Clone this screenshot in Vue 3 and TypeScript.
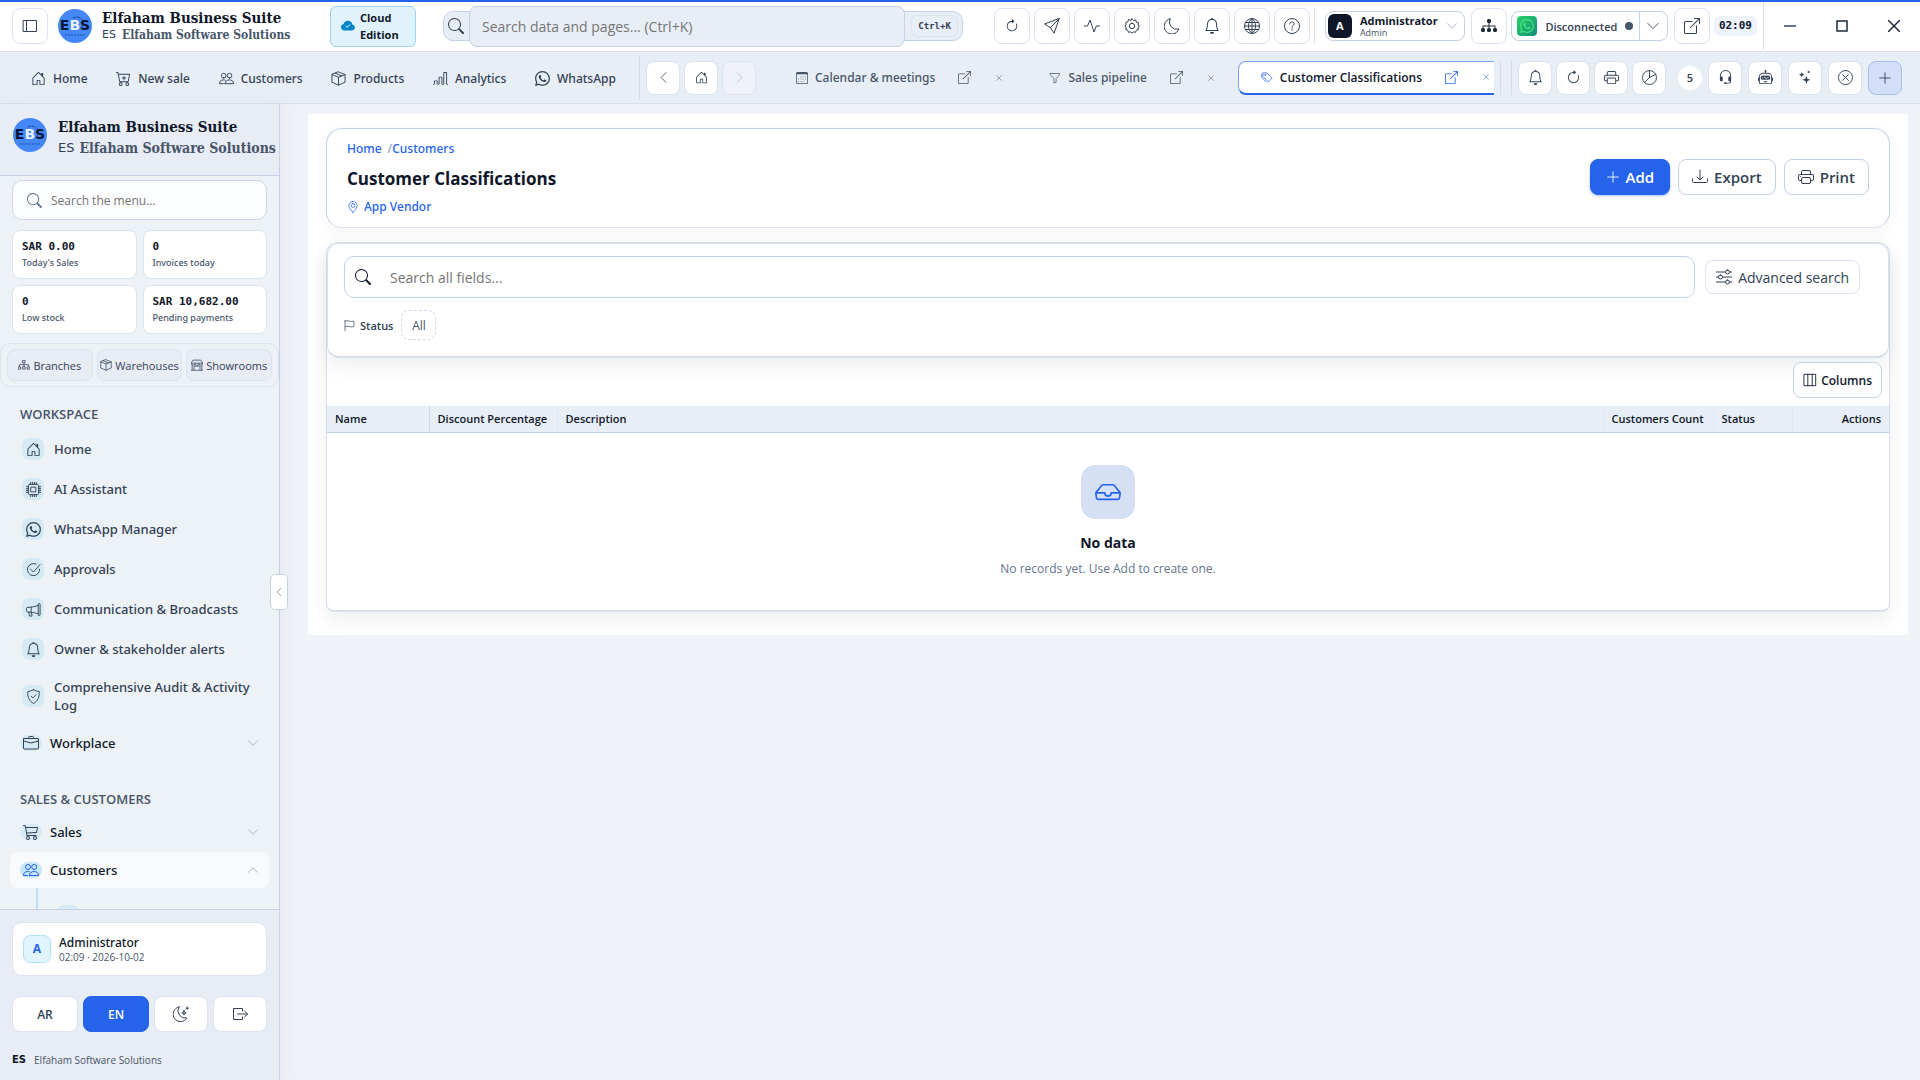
<script setup lang="ts">
import { h, ref } from 'vue'

interface Glyph { d: string; stroke?: boolean }

const glyphs: Record<string, Glyph> = {
  house: { d: 'M8.354 1.146a.5.5 0 0 0-.708 0l-6 6A.5.5 0 0 0 1.5 7.5v7a.5.5 0 0 0 .5.5h4.5a.5.5 0 0 0 .5-.5v-4h2v4a.5.5 0 0 0 .5.5H14a.5.5 0 0 0 .5-.5v-7a.5.5 0 0 0-.146-.354L13 5.793V2.5a.5.5 0 0 0-.5-.5h-1a.5.5 0 0 0-.5.5v1.293zM2.5 14V7.707l5.5-5.5 5.5 5.5V14H10v-4a.5.5 0 0 0-.5-.5h-3a.5.5 0 0 0-.5.5v4z' },
  cartPlus: { d: 'M9 5.5a.5.5 0 0 0-1 0V7H6.5a.5.5 0 0 0 0 1H8v1.500a.5.5 0 0 0 1 0V8h1.500a.5.5 0 0 0 0-1H9zM.5 1a.5.5 0 0 0 0 1h1.110l.401 1.607 1.498 7.985A.5.5 0 0 0 4 12h1a2 2 0 1 0 0 4 2 2 0 0 0 0-4h7a2 2 0 1 0 0 4 2 2 0 0 0 0-4h1a.5.5 0 0 0 .491-.408l1.500-8A.5.5 0 0 0 14.500 3H2.890l-.405-1.621A.5.5 0 0 0 2 1zm3.915 10L3.102 4h10.796l-1.313 7zM6 14a1 1 0 1 1-2 0 1 1 0 0 1 2 0m7 0a1 1 0 1 1-2 0 1 1 0 0 1 2 0' },
  cart: { d: 'M0 1.500A.5.5 0 0 1 .5 1H2a.5.5 0 0 1 .485.379L2.890 3H14.500a.5.5 0 0 1 .49.598l-1 5a.5.5 0 0 1-.465.401l-9.397.472L4.415 11H13a.5.5 0 0 1 0 1H4a.5.5 0 0 1-.491-.408L2.010 3.607 1.610 2H.5a.5.5 0 0 1-.5-.5M3.102 4l.84 4.479 9.144-.459L13.890 4zM5 12a2 2 0 1 0 0 4 2 2 0 0 0 0-4m7 0a2 2 0 1 0 0 4 2 2 0 0 0 0-4m-7 1a1 1 0 1 1 0 2 1 1 0 0 1 0-2m7 0a1 1 0 1 1 0 2 1 1 0 0 1 0-2' },
  people: { stroke: true, d: 'M5 7.500a2.500 2.500 0 1 0 0-5 2.500 2.500 0 0 0 0 5zM11.200 7.500a2.500 2.500 0 1 0 0-5 2.500 2.500 0 0 0 0 5zM6.500 13.500h9c0-2.600-1.800-4-4.400-4s-4.600 1.400-4.600 4zM4.500 13.500h-4c0-2.600 1.700-4 4.200-4q1 0 1.800.3' },
  box: { stroke: true, d: 'M8 1 15 3.800V12L8 15 1 12V3.800zM1 3.800 8 6.700 15 3.800M8 6.700V15M4.500 2.400l7 2.900' },
  bars: { d: 'M4 11H2v3h2zm5-4H7v7h2zm5-5v12h-2V2zm-2-1a1 1 0 0 0-1 1v12a1 1 0 0 0 1 1h2a1 1 0 0 0 1-1V2a1 1 0 0 0-1-1zM6 7a1 1 0 0 1 1-1h2a1 1 0 0 1 1 1v7a1 1 0 0 1-1 1H7a1 1 0 0 1-1-1zm-5 4a1 1 0 0 1 1-1h2a1 1 0 0 1 1 1v3a1 1 0 0 1-1 1H2a1 1 0 0 1-1-1zM0 14h16v1H0z' },
  whatsapp: { d: 'M13.601 2.326A7.850 7.850 0 0 0 7.994 0C3.627 0 .068 3.558.064 7.926c0 1.399.366 2.760 1.057 3.965L0 16l4.204-1.102a7.900 7.900 0 0 0 3.790.965h.004c4.368 0 7.926-3.558 7.930-7.930A7.900 7.900 0 0 0 13.600 2.326zM7.994 14.521a6.600 6.600 0 0 1-3.356-.92l-.24-.144-2.494.654.666-2.433-.156-.251a6.560 6.560 0 0 1-1.007-3.505c0-3.626 2.957-6.584 6.591-6.584a6.560 6.560 0 0 1 4.660 1.931 6.560 6.560 0 0 1 1.928 4.660c-.004 3.639-2.961 6.592-6.592 6.592m3.615-4.934c-.197-.099-1.170-.578-1.353-.646-.182-.065-.315-.099-.445.099-.133.197-.513.646-.627.775-.114.133-.232.148-.43.050-.197-.1-.836-.308-1.592-.985-.59-.525-.985-1.175-1.103-1.372-.114-.198-.011-.304.088-.403.087-.088.197-.232.296-.346.100-.114.133-.198.198-.33.065-.134.034-.248-.015-.347-.050-.099-.445-1.076-.612-1.470-.16-.389-.323-.335-.445-.34-.114-.007-.247-.007-.38-.007a.73.73 0 0 0-.529.247c-.182.198-.691.677-.691 1.654s.710 1.916.810 2.049c.098.133 1.394 2.132 3.383 2.992.47.205.84.326 1.129.418.475.152.904.129 1.246.080.380-.058 1.171-.48 1.338-.943.164-.464.164-.86.114-.943-.049-.084-.182-.133-.38-.232' },
  left: { stroke: true, d: 'M11 2 5 8l6 6' },
  right: { stroke: true, d: 'm5 2 6 6-6 6' },
  down: { stroke: true, d: 'm2 5 6 6 6-6' },
  up: { stroke: true, d: 'm2 11 6-6 6 6' },
  calendar: { d: 'M14 0H2a2 2 0 0 0-2 2v12a2 2 0 0 0 2 2h12a2 2 0 0 0 2-2V2a2 2 0 0 0-2-2M1 3.857C1 3.384 1.448 3 2 3h12c.552 0 1 .384 1 .857v10.286c0 .473-.448.857-1 .857H2c-.552 0-1-.384-1-.857zM6 6h1v1H6zM9 6h1v1H9zM12 6h1v1h-1zM3 9h1v1H3zM6 9h1v1H6zM9 9h1v1H9zM12 9h1v1h-1zM3 12h1v1H3zM6 12h1v1H6zM9 12h1v1H9z' },
  external: { d: 'M8.636 3.500a.5.5 0 0 0-.5-.5H1.500A1.500 1.500 0 0 0 0 4.500v10A1.500 1.500 0 0 0 1.500 16h10a1.500 1.500 0 0 0 1.500-1.500V7.864a.5.5 0 0 0-1 0V14.500a.5.5 0 0 1-.5.5h-10a.5.5 0 0 1-.5-.5v-10a.5.5 0 0 1 .5-.5h6.636a.5.5 0 0 0 .5-.5M16 .5a.5.5 0 0 0-.5-.5h-5a.5.5 0 0 0 0 1h3.793L6.146 9.146a.5.5 0 1 0 .708.708L15 1.707V5.500a.5.5 0 0 0 1 0z' },
  funnel: { stroke: true, d: 'M2 2h12v1.700L9.500 8.800v4.800l-3 1V8.800L2 3.700z' },
  tags: { stroke: true, d: 'M3 2.500h4.800l7 7-5 5-6.800-7zM1 4v4.500l6 6.300M6.200 5.200a.7.7 0 1 1-1.400 0 .7.7 0 0 1 1.400 0' },
  bell: { d: 'M8 16a2 2 0 0 0 2-2H6a2 2 0 0 0 2 2M8 1.918l-.797.161A4 4 0 0 0 4 6c0 .628-.134 2.197-.459 3.742-.16.767-.376 1.566-.663 2.258h10.244c-.287-.692-.502-1.490-.663-2.258C12.134 8.197 12 6.628 12 6a4 4 0 0 0-3.203-3.920zM14.220 12c.223.447.481.801.780 1H1c.299-.199.557-.553.780-1C2.680 10.200 3 6.880 3 6c0-2.420 1.720-4.440 4.005-4.901a1 1 0 1 1 1.990 0A5 5 0 0 1 13 6c0 .880.320 4.200 1.220 6' },
  refresh: { d: 'M8 3a5 5 0 1 0 4.546 2.914.5.5 0 0 1 .908-.417A6 6 0 1 1 8 2zM8 4.466V.534a.25.25 0 0 1 .41-.192l2.360 1.966c.12.1.12.284 0 .384L8.410 4.658A.25.25 0 0 1 8 4.466' },
  printer: { d: 'M2.500 8a.5.5 0 1 0 0-1 .5.5 0 0 0 0 1M5 1a2 2 0 0 0-2 2v2H2a2 2 0 0 0-2 2v3a2 2 0 0 0 2 2h1v1a2 2 0 0 0 2 2h6a2 2 0 0 0 2-2v-1h1a2 2 0 0 0 2-2V7a2 2 0 0 0-2-2h-1V3a2 2 0 0 0-2-2zM4 3a1 1 0 0 1 1-1h6a1 1 0 0 1 1 1v2H4zm1 5a2 2 0 0 0-2 2v1H2a1 1 0 0 1-1-1V7a1 1 0 0 1 1-1h12a1 1 0 0 1 1 1v3a1 1 0 0 1-1 1h-1v-1a2 2 0 0 0-2-2zm7 2v3a1 1 0 0 1-1 1H5a1 1 0 0 1-1-1v-3a1 1 0 0 1 1-1h6a1 1 0 0 1 1 1' },
  pie: { stroke: true, d: 'M8 .5a7.500 7.500 0 1 0 0 15 7.500 7.500 0 0 0 0-15zM8 .5V8l-5.300 5.300M8 8l6.600-3.300' },
  headset: { d: 'M8 1a5 5 0 0 0-5 5v1h1a1 1 0 0 1 1 1v3a1 1 0 0 1-1 1H3a1 1 0 0 1-1-1V6a6 6 0 1 1 12 0v6a2.500 2.500 0 0 1-2.500 2.500H9.366a1 1 0 0 1-.866.5h-1a1 1 0 1 1 0-2h1a1 1 0 0 1 .866.5H11.500A1.500 1.500 0 0 0 13 12h-1a1 1 0 0 1-1-1V8a1 1 0 0 1 1-1h1V6a5 5 0 0 0-5-5' },
  robot: { d: 'M6 12.500a.5.5 0 0 1 .5-.5h3a.5.5 0 0 1 0 1h-3a.5.5 0 0 1-.5-.5M3 8.062C3 6.760 4.235 5.765 5.530 5.886a26.600 26.600 0 0 0 4.940 0C11.765 5.765 13 6.760 13 8.062v1.157a.93.93 0 0 1-.765.935c-.845.147-2.340.346-4.235.346s-3.390-.2-4.235-.346A.93.93 0 0 1 3 9.219zm4.542-.827a.25.25 0 0 0-.217.068l-.92.900a25 25 0 0 1-1.871-.183.25.25 0 0 0-.068.495c.55.076 1.232.149 2.020.193a.25.25 0 0 0 .189-.071l.754-.736.847 1.710a.25.25 0 0 0 .404.062l.932-.970a25 25 0 0 0 1.922-.188.25.25 0 0 0-.068-.495c-.538.074-1.207.145-1.980.189a.25.25 0 0 0-.166.076l-.754.785-.842-1.700a.25.25 0 0 0-.182-.135M8.500 1.866a1 1 0 1 0-1 0V3h-2A4.500 4.500 0 0 0 1 7.500V8a1 1 0 0 0-1 1v2a1 1 0 0 0 1 1v1a2 2 0 0 0 2 2h10a2 2 0 0 0 2-2v-1a1 1 0 0 0 1-1V9a1 1 0 0 0-1-1v-.5A4.500 4.500 0 0 0 10.500 3h-2zM14 7.500V13a1 1 0 0 1-1 1H3a1 1 0 0 1-1-1V7.500A3.500 3.500 0 0 1 5.500 4h5A3.500 3.500 0 0 1 14 7.500' },
  sparkles: { d: 'M9 6.200 10 9.300l3.200 1.200L10 11.700 9 15l-1.100-3.300-3.200-1.200 3.200-1.200zM4 2l.8 2.100L7 5l-2.200.8L4 8l-.8-2.200L1 5l2.200-.9zM11.500 0l.5 1.500 1.500.5-1.500.6-.5 1.500-.5-1.500L9.500 2l1.500-.5z' },
  xCircle: { stroke: true, d: 'M8 .5a7.500 7.500 0 1 0 0 15 7.500 7.500 0 0 0 0-15zM5 5l6 6M11 5l-6 6' },
  plus: { stroke: true, d: 'M8 2v12M2 8h12' },
  close: { stroke: true, d: 'm3 3 10 10M13 3 3 13' },
  send: { stroke: true, d: 'M15.300.7 10 15.200l-3.600-5.600L.9 6.200zM15 1 6.400 9.600' },
  activity: { stroke: true, d: 'M0 8h3.500L6 2l4 12 2.400-6H16' },
  gear: { stroke: true, d: 'm8 .8 1.500 1.700 2.300-.5.500 2.200 2.200.500-.5 2.300L15.500 8l-1.500 1.300.500 2.200-2.200.700-.7 2.200-2.200-.6L8 15.200l-1.300-1.400-2.200.600-.7-2.200-2.200-.7.600-2.200L.8 8l1.400-1.300-.6-2.200 2.200-.7.700-2.200 2.200.700zM8 5.300a2.700 2.700 0 1 0 0 5.400 2.700 2.700 0 0 0 0-5.400z' },
  moon: { stroke: true, d: 'M6 .8A7.700 7.700 0 1 0 15 11 7.500 7.500 0 0 1 6 .8z' },
  moonStars: { stroke: true, d: 'M6 .8A7.500 7.500 0 1 0 14 12 7.500 7.500 0 0 1 6 .8zM11 4.500l.5 1.700 1.700.600-1.700.600-.5 1.700-.6-1.700-1.600-.6 1.600-.6zM14.200 1v2.400M13 2.200h2.400' },
  globe: { stroke: true, d: 'M8 .5a7.500 7.500 0 1 0 0 15 7.500 7.500 0 0 0 0-15zM8 .5v15M.5 8h15M1.700 4.500h12.600M1.700 11.500h12.600M8 .5C5.600 2 4.500 4.800 4.500 8s1.100 6 3.500 7.500M8 .5C10.400 2 11.500 4.800 11.500 8s-1.100 6-3.500 7.500' },
  help: { stroke: true, d: 'M8 .5a7.500 7.500 0 1 0 0 15 7.500 7.500 0 0 0 0-15zM5.800 6c0-1.300.9-2.100 2.200-2.100s2.200.8 2.200 2c0 1.600-2.200 1.700-2.200 3.500M8 11v1.200' },
  diagram: { d: 'M6 2.500A1.500 1.500 0 0 1 7.500 1h1A1.500 1.500 0 0 1 10 2.500v1A1.500 1.500 0 0 1 8.500 5v2.500H14a.5.5 0 0 1 .5.5v2a1.500 1.500 0 0 1 1.500 1.500v1a1.500 1.500 0 0 1-1.500 1.500h-1a1.500 1.500 0 0 1-1.500-1.500v-1a1.500 1.500 0 0 1 1.500-1.500V8.500h-5V10a1.500 1.500 0 0 1 1.500 1.500v1A1.500 1.500 0 0 1 8.500 14h-1A1.500 1.500 0 0 1 6 12.500v-1A1.500 1.500 0 0 1 7.500 10V8.500h-5V10A1.500 1.500 0 0 1 4 11.500v1A1.500 1.500 0 0 1 2.500 14h-1A1.500 1.500 0 0 1 0 12.500v-1A1.500 1.500 0 0 1 1.500 10V8a.5.5 0 0 1 .5-.5h5.500V5A1.500 1.500 0 0 1 6 3.500z' },
  branches: { stroke: true, d: 'M6.500 2h3v3h-3zM8 5v5M2 10V7.500h12V10M.5 10.500h3v3h-3zM6.500 10.500h3v3h-3zM12.500 10.500h3v3h-3z' },
  sidebar: { stroke: true, d: 'M1.500 2.500h13v11h-13zM4.500 2.500v11' },
  cloud: { d: 'M8 2a5.530 5.530 0 0 0-3.594 1.342c-.766.660-1.321 1.520-1.464 2.383C1.266 6.095 0 7.555 0 9.318 0 11.366 1.708 13 3.781 13h8.906C14.502 13 16 11.570 16 9.773c0-1.636-1.242-2.969-2.834-3.194C12.923 3.999 10.690 2 8 2m2.354 4.854-3 3a.5.5 0 0 1-.708 0l-1.500-1.500a.5.5 0 1 1 .708-.708L7 8.793l2.646-2.647a.5.5 0 0 1 .708.708' },
  search: { d: 'M11.742 10.344a6.500 6.500 0 1 0-1.397 1.398h-.001q.044.060.098.115l3.850 3.850a1 1 0 0 0 1.415-1.414l-3.850-3.850a1 1 0 0 0-.115-.1zM12 6.500a5.500 5.500 0 1 1-11 0 5.500 5.500 0 0 1 11 0' },
  cpu: { stroke: true, d: 'M4 2.500h8A1.500 1.500 0 0 1 13.500 4v8a1.500 1.500 0 0 1-1.500 1.500H4A1.500 1.500 0 0 1 2.500 12V4A1.500 1.500 0 0 1 4 2.500zM5.500 5.500h5v5h-5zM5 0v2.500M7 0v2.500M9 0v2.500M11 0v2.500M5 13.500V16M7 13.500V16M9 13.500V16M11 13.500V16M0 5h2.500M0 7h2.500M0 9h2.500M0 11h2.500M13.500 5H16M13.500 7H16M13.500 9H16M13.500 11H16' },
  approve: { stroke: true, d: 'M10.800 2.200a6.500 6.500 0 1 0 3.700 5.500M4.800 7.500 8 10.700l7-8' },
  megaphone: { stroke: true, d: 'M13 2.500a1 1 0 0 1 2 0v11a1 1 0 0 1-2 0zM13 3.500C10 5 7 5.500 2 5.700a1.500 1.500 0 0 0-1.500 1.500v2A1.500 1.500 0 0 0 2 10.700c5 .2 8 .800 11 2.100M5.500 5.500v5.300M3 11l.8 4h2.700l-.8-3.700' },
  shield: { stroke: true, d: 'M8 .8c2 1 4 1.600 6 2 .7 6-1.800 10.400-6 12.600C3.800 13.200 1.300 8.800 2 2.800c2-.4 4-1 6-2zM5.500 7.700 7.300 9.500l3.400-3.400' },
  briefcase: { stroke: true, d: 'M1 3.500h14a.5.5 0 0 1 .5.5v9.500a.5.5 0 0 1-.5.5H1a.5.5 0 0 1-.5-.5V4a.5.5 0 0 1 .5-.5zM5.500 3.500v-1a1 1 0 0 1 1-1h3a1 1 0 0 1 1 1v1M.5 6 8 8l7.500-2' },
  logout: { stroke: true, d: 'M10.500 5V2.500h-9v11h9V11M5.500 8h10M12.500 5l3 3-3 3' },
  pin: { stroke: true, d: 'M8 15.300C5 11.800 2.500 9 2.500 6a5.500 5.500 0 0 1 11 0c0 3-2.500 5.800-5.500 9.300zM8 3.500a2.500 2.500 0 1 0 0 5 2.500 2.500 0 0 0 0-5z' },
  flag: { stroke: true, d: 'M1.500.5v15.500M1.500 1.500c4-2.200 7.500 2.200 13 0v8c-5.500 2.200-9-2.200-13 0' },
  download: { stroke: true, d: 'M.5 10v2.500a1 1 0 0 0 1 1h13a1 1 0 0 0 1-1V10M8 1v9.500M5 8l3 3 3-3' },
  sliders: { stroke: true, d: 'M0 3h9.500M13.500 3H16M11.500 1a2 2 0 1 0 0 4 2 2 0 0 0 0-4zM0 8h2.500M6.500 8H16M4.500 6a2 2 0 1 0 0 4 2 2 0 0 0 0-4zM0 13h9.500M13.500 13H16M11.500 11a2 2 0 1 0 0 4 2 2 0 0 0 0-4z' },
  columns: { stroke: true, d: 'M1.500 1.500h13v13h-13zM5.500 1.500v13M10.500 1.500v13' },
  inbox: { d: 'M4.980 4a.5.5 0 0 0-.39.188L1.540 8H6a.5.5 0 0 1 .5.5 1.500 1.500 0 1 0 3 0A.5.5 0 0 1 10 8h4.460l-3.050-3.812A.5.5 0 0 0 11.020 4zm9.954 5H10.450a2.500 2.500 0 0 1-4.900 0H1.066l.32 2.562a.5.5 0 0 0 .497.438h12.234a.5.5 0 0 0 .496-.438zM3.809 3.563A1.500 1.500 0 0 1 4.981 3h6.038a1.500 1.500 0 0 1 1.172.563l3.700 4.625a.5.5 0 0 1 .105.374l-.39 3.124A1.500 1.500 0 0 1 14.117 13H1.883a1.500 1.500 0 0 1-1.489-1.314l-.39-3.124a.5.5 0 0 1 .106-.374z' },
  shop: { stroke: true, d: 'M3 1.500h10l2.500 4a2.300 2.300 0 0 1-5 .5 2.500 2.500 0 0 1-5 0 2.300 2.300 0 0 1-5-.5zM1.500 8v6.500M14.500 8v6.500M0 15h16M4 14.500v-5h8v5M.5 5.500h15' },
}

const Icon = (props: { name: string; size?: number }) => {
  const g = glyphs[props.name]
  const s = props.size ?? 16
  return h('svg', { width: s, height: s, viewBox: '0 0 16 16', 'aria-hidden': 'true', class: 'ic' }, [
    h('path', g.stroke
      ? { d: g.d, fill: 'none', stroke: 'currentColor', 'stroke-width': 1, 'stroke-linecap': 'round', 'stroke-linejoin': 'round' }
      : { d: g.d, fill: 'currentColor', 'fill-rule': 'evenodd' }),
  ])
}
Icon.props = ['name', 'size']

const BrandMark = () => h('svg', { width: 34, height: 34, viewBox: '0 0 34 34', 'aria-hidden': 'true' }, [
  h('circle', { cx: 17, cy: 17, r: 17, fill: '#4488f7' }),
  h('path', { d: 'M15 9c6-3 13 2 9 9', fill: 'none', stroke: '#1e3a8a', 'stroke-width': 1, 'stroke-dasharray': '3 1' }),
  h('text', { x: 17, y: 21, 'text-anchor': 'middle', 'font-family': 'DejaVu Sans', 'font-weight': 700, 'font-size': 14, fill: '#0b1738' }, [
    'E', h('tspan', { fill: '#e6f0ff' }, 'B'), 'S',
  ]),
  h('path', { d: 'M7 26h20', stroke: '#1d4fa8', 'stroke-width': 1, 'stroke-dasharray': '2 1' }),
])

const quickLinks = [
  { icon: 'house', label: 'Home' },
  { icon: 'cartPlus', label: 'New sale' },
  { icon: 'people', label: 'Customers' },
  { icon: 'box', label: 'Products' },
  { icon: 'bars', label: 'Analytics' },
  { icon: 'whatsapp', label: 'WhatsApp' },
]
const topActions = [
  ['refresh', 'Refresh'], ['send', 'Send'], ['activity', 'Activity'], ['gear', 'Settings'],
  ['moon', 'Dark mode'], ['bell', 'Notifications'], ['globe', 'Language'], ['help', 'Help'],
]
const tabs = [
  { icon: 'calendar', label: 'Calendar & meetings' },
  { icon: 'funnel', label: 'Sales pipeline' },
  { icon: 'tags', label: 'Customer Classifications' },
]
const activeTab = ref(2)
const pageTools = [['bell', 'Alerts'], ['refresh', 'Reload'], ['printer', 'Print page'], ['pie', 'Reports']]
const assistTools = [['headset', 'Support'], ['robot', 'Assistant'], ['sparkles', 'Suggestions'], ['xCircle', 'Close all']]
const stats = [
  { value: 'SAR 0.00', label: "Today's Sales" },
  { value: '0', label: 'Invoices today' },
  { value: '0', label: 'Low stock' },
  { value: 'SAR 10,682.00', label: 'Pending payments' },
]
const places = [
  { icon: 'branches', label: 'Branches' },
  { icon: 'box', label: 'Warehouses' },
  { icon: 'shop', label: 'Showrooms' },
]
const workspace = [
  { icon: 'house', label: 'Home' },
  { icon: 'cpu', label: 'AI Assistant' },
  { icon: 'whatsapp', label: 'WhatsApp Manager' },
  { icon: 'approve', label: 'Approvals' },
  { icon: 'megaphone', label: 'Communication & Broadcasts' },
  { icon: 'bell', label: 'Owner & stakeholder alerts' },
  { icon: 'shield', label: 'Comprehensive Audit & Activity Log' },
]
const columns = [
  { label: 'Name', cls: 'c-name' },
  { label: 'Discount Percentage', cls: 'c-disc' },
  { label: 'Description', cls: 'c-desc' },
  { label: 'Customers Count', cls: 'c-count' },
  { label: 'Status', cls: 'c-status' },
  { label: 'Actions', cls: 'c-act' },
]
const lang = ref('EN')
const globalQuery = ref('')
const menuQuery = ref('')
const tableQuery = ref('')
</script>

<template>
  <div class="app">
    <header class="topbar">
      <button class="sq" aria-label="Toggle sidebar"><Icon name="sidebar" /></button>
      <BrandMark class="mark" />
      <div class="brand">
        <strong>Elfaham Business Suite</strong>
        <span><b class="es">ES</b>Elfaham Software Solutions</span>
      </div>
      <div class="cloud"><Icon name="cloud" :size="14" /><span>Cloud Edition</span></div>
      <label class="gsearch">
        <Icon name="search" class="gicon" />
        <input v-model="globalQuery" type="text" placeholder="Search data and pages... (Ctrl+K)" aria-label="Search data and pages" />
        <kbd>Ctrl+K</kbd>
      </label>
      <div class="actions">
        <button v-for="a in topActions" :key="a[0]" class="sq" :aria-label="a[1]"><Icon :name="a[0]" :size="a[0] === 'refresh' ? 14 : 16" /></button>
      </div>
      <div class="account">
        <button class="user">
          <span class="avatar">A</span>
          <span class="who"><strong>Administrator</strong><small>Admin</small></span>
          <Icon name="down" :size="12" class="muted" />
        </button>
      </div>
      <button class="sq org" aria-label="Branches"><Icon name="diagram" /></button>
      <div class="wa">
        <button class="wa-main"><span class="wa-ic"><Icon name="whatsapp" :size="14" /></span>Disconnected<i class="dot"></i></button>
        <button class="wa-more" aria-label="Connection menu"><Icon name="down" :size="14" /></button>
      </div>
      <button class="sq" aria-label="Open in new window"><Icon name="external" /></button>
      <time class="clock">02:09</time>
      <div class="win">
        <button aria-label="Minimize"><svg width="12" height="12"><path d="M0 6h12" stroke="#64748b" stroke-width="2" /></svg></button>
        <button aria-label="Maximize"><svg width="12" height="12"><path d="M1 1h10v10H1z" fill="none" stroke="#1e293b" stroke-width="1.500" /></svg></button>
        <button aria-label="Close"><svg width="12" height="12"><path d="m0 0 12 12M12 0 0 12" stroke="#1e293b" stroke-width="1.500" /></svg></button>
      </div>
    </header>

    <div class="navbar">
      <nav class="quick">
        <a v-for="q in quickLinks" :key="q.label" href="#"><Icon :name="q.icon" :size="15" />{{ q.label }}</a>
      </nav>
      <div class="history">
        <button class="tool" aria-label="Back"><Icon name="left" :size="13" /></button>
        <button class="tool" aria-label="Start page"><Icon name="house" :size="13" /></button>
        <button class="tool" aria-label="Forward" disabled><Icon name="right" :size="13" /></button>
      </div>
      <div class="tabs">
        <div v-for="(t, i) in tabs" :key="t.label" class="tab" :class="{ on: i === activeTab }">
          <button class="tab-name" @click="activeTab = i"><Icon :name="t.icon" :size="12" /><span>{{ t.label }}</span></button>
          <button class="tab-x" aria-label="Open tab in window"><Icon name="external" :size="13" /></button>
          <button class="tab-x" aria-label="Close tab"><Icon name="close" :size="8" /></button>
        </div>
      </div>
      <span class="rule"></span>
      <div class="tools">
        <button v-for="p in pageTools" :key="p[1]" class="tool" :aria-label="p[1]"><Icon :name="p[0]" :size="15" /></button>
        <span class="count">5</span>
        <button v-for="p in assistTools" :key="p[1]" class="tool wide" :aria-label="p[1]"><Icon :name="p[0]" :size="15" /></button>
        <button class="tool wide add" aria-label="New tab"><Icon name="plus" :size="14" /></button>
      </div>
    </div>

    <div class="body">
      <aside class="side">
        <div class="side-brand">
          <BrandMark />
          <div class="brand">
            <strong>Elfaham Business Suite</strong>
            <span><b class="es">ES</b>Elfaham Software Solutions</span>
          </div>
        </div>
        <label class="msearch"><Icon name="search" :size="15" /><input v-model="menuQuery" type="text" placeholder="Search the menu..." aria-label="Search the menu" /></label>
        <div class="stats">
          <div v-for="s in stats" :key="s.label" class="stat"><b>{{ s.value }}</b><span>{{ s.label }}</span></div>
        </div>
        <div class="places">
          <button v-for="p in places" :key="p.label"><Icon :name="p.icon" :size="12" />{{ p.label }}</button>
        </div>
        <nav class="menu">
          <h2>WORKSPACE</h2>
          <a v-for="w in workspace" :key="w.label" href="#" class="item"><span class="chip"><Icon :name="w.icon" :size="15" /></span><span>{{ w.label }}</span></a>
          <button class="group"><span class="chip flat"><Icon name="briefcase" /></span>Workplace<Icon name="down" :size="12" class="chev" /></button>
          <h2 class="second">SALES &amp; CUSTOMERS</h2>
          <button class="group"><span class="chip flat"><Icon name="cart" /></span>Sales<Icon name="down" :size="12" class="chev" /></button>
          <button class="group open"><span class="chip flat blue"><Icon name="people" /></span>Customers<Icon name="up" :size="12" class="chev" /></button>
          <div class="tree"><span class="chip"></span></div>
        </nav>
        <div class="foot">
          <div class="me"><span class="me-a">A</span><div><strong>Administrator</strong><small>02:09 · 2026-10-02</small></div></div>
          <div class="foot-btns">
            <button v-for="l in ['AR', 'EN']" :key="l" class="lang" :class="{ on: lang === l }" @click="lang = l">{{ l }}</button>
            <button aria-label="Theme"><Icon name="moonStars" /></button>
            <button aria-label="Log out"><Icon name="logout" /></button>
          </div>
          <div class="copy"><b class="es">ES</b>Elfaham Software Solutions</div>
        </div>
        <button class="collapse" aria-label="Collapse sidebar"><Icon name="left" :size="10" /></button>
      </aside>

      <main class="main">
        <div class="sheet">
          <section class="head card">
            <div class="head-text">
              <nav class="crumbs"><a href="#">Home</a><i>/</i><a href="#">Customers</a></nav>
              <h1>Customer Classifications</h1>
              <a href="#" class="vendor"><Icon name="pin" :size="12" />App Vendor</a>
            </div>
            <button class="btn primary"><Icon name="plus" :size="14" />Add</button>
            <button class="btn"><Icon name="download" />Export</button>
            <button class="btn"><Icon name="printer" />Print</button>
          </section>

          <section class="list">
            <div class="filter">
              <div class="frow">
                <label class="fsearch"><Icon name="search" /><input v-model="tableQuery" type="text" placeholder="Search all fields..." aria-label="Search all fields" /></label>
                <button class="adv"><Icon name="sliders" />Advanced search</button>
              </div>
              <div class="srow"><Icon name="flag" :size="11" /><b>Status</b><button class="all">All</button></div>
            </div>
            <div class="colbar"><button class="cols"><Icon name="columns" :size="14" />Columns</button></div>
            <table>
              <thead><tr><th v-for="c in columns" :key="c.label" :class="c.cls" scope="col">{{ c.label }}</th></tr></thead>
              <tbody>
                <tr><td colspan="6">
                  <div class="empty">
                    <span class="empty-ic"><Icon name="inbox" :size="26" /></span>
                    <strong>No data</strong>
                    <span>No records yet. Use Add to create one.</span>
                  </div>
                </td></tr>
              </tbody>
            </table>
          </section>
        </div>
      </main>
    </div>
  </div>
</template>

<style>
body { margin: 0; background: #eff3f8; }
</style>

<style scoped>
* { box-sizing: border-box; }
.app {
  display: flex; flex-direction: column; height: 100vh; overflow: hidden;
  font-family: "Open Sans", "Noto Sans", sans-serif; font-size: 12px; color: #334155; background: #eff3f8;
}
button { font: inherit; color: inherit; margin: 0; padding: 0; border: 0; background: none; display: flex; align-items: center; justify-content: center; white-space: nowrap; }
input { font: inherit; color: inherit; border: 0; outline: 0; background: none; min-width: 0; padding: 0; }
input::placeholder { color: #757575; opacity: 1; }
a { color: inherit; text-decoration: none; }
svg { flex: none; display: block; }
.muted { color: #94a3b8; }
.quick a, .tab-name, .item, .group, .crumbs, .vendor, .me strong, .stat span { font-family: "Noto Sans", sans-serif; font-weight: 500; }

.topbar { display: flex; align-items: center; height: 52px; flex: none; padding: 0 0 1px 12px; background: #fff; border-top: 2px solid #2563eb; border-bottom: 1px solid #d8e0ec; }
.sq { width: 36px; height: 36px; flex: none; border: 1px solid #dbe3f0; border-radius: 8px; background: #fff; }
.mark { margin-left: 10px; }
.brand { display: flex; flex-direction: column; font-family: "DejaVu Serif Condensed", "DejaVu Serif", serif; font-weight: 700; white-space: nowrap; }
.brand strong { color: #0f172a; font-size: 15px; line-height: 18px; }
.brand span { display: flex; align-items: center; gap: 6px; color: #475569; font-size: 12px; line-height: 16px; }
.topbar .brand { width: 218px; margin-left: 10px; }
.es { font-family: "DejaVu Sans", sans-serif; font-weight: 400; font-size: 11px; color: #334155; }
.cloud { display: flex; align-items: center; gap: 5px; width: 86px; height: 41px; flex: none; margin-left: 10px; padding-left: 10px; border: 1px solid #9fd3ea; border-radius: 6px; background: #e0f2fa; color: #0284c7; }
.cloud span { width: 44px; color: #0f172a; font-weight: 700; font-size: 11px; line-height: 17px; }
.gsearch { display: flex; align-items: center; flex: 1; height: 30px; margin-left: 27px; border: 1px solid #c5d1e4; border-radius: 10px; background: #e8eef6; }
.gicon { margin: 0 5px 0 4px; }
.gsearch input { flex: 1; height: 41px; padding: 0 12px; border: 1px solid #c5d1e4; border-radius: 8px; background: #e8eef6; font-size: 14px; }
.gsearch kbd { margin: 0 4px 0 6px; padding: 0 6px; border: 1px solid #dbe3f0; border-radius: 6px; font: 700 9px/20px "DejaVu Sans Mono", "Liberation Mono", monospace; }
.actions { display: flex; gap: 4px; margin-left: 31px; padding-right: 4px; border-right: 1px solid #dbe3f0; }
.account { margin: 0 6px 0 10px; }
.user { width: 140px; height: 30px; justify-content: flex-start; gap: 8px; padding: 0 2px; border: 1px solid #c5d1e4; border-radius: 8px; background: #fff; }
.avatar { width: 24px; height: 24px; border-radius: 6px; background: #0f172a; color: #fff; font-weight: 700; font-size: 11px; line-height: 24px; }
.who { display: flex; flex-direction: column; align-items: flex-start; }
.who strong { color: #0f172a; font-size: 11px; line-height: 12px; }
.who small { font-size: 9px; line-height: 11px; color: #475569; }
.org { color: #1e293b; }
.wa { display: flex; height: 30px; margin: 0 6px 0 4px; border: 1px solid #c5d1e4; border-radius: 8px; background: #fff; }
.wa-main { width: 128px; gap: 8px; font-weight: 600; font-size: 11px; border-right: 1px solid #c5d1e4; }
.wa-ic { display: flex; align-items: center; justify-content: center; width: 20px; height: 20px; border-radius: 4px; background: linear-gradient(135deg, #25d366, #128c7e); color: #4be07f; }
.dot { width: 8px; height: 8px; border-radius: 50%; background: #475569; }
.wa-more { width: 27px; }
.clock { margin: 0 6px 0 4px; padding: 0 5px; border-radius: 6px; background: #eef3fe; color: #0f172a; font: 700 11px/20px "DejaVu Sans Mono", monospace; }
.win { display: flex; align-self: stretch; width: 157px; border-left: 1px solid #d8e0ec; }
.win button { flex: 1; }

.navbar { display: flex; align-items: center; height: 52px; flex: none; background: #e8eef6; border-bottom: 1px solid #d8e0ec; }
.quick { display: flex; justify-content: space-between; width: 640px; height: 44px; flex: none; align-items: center; padding: 2px 23px 0 31px; border-right: 1px solid #d3dce9; }
.quick a { display: flex; align-items: center; gap: 7px; font-size: 12px; }
.history { display: flex; gap: 4px; margin-left: 6px; }
.tool { width: 34px; height: 34px; border: 1px solid #dbe3f0; border-radius: 8px; background: #fff; }
.tool:disabled { background: #eff3f9; color: #b6bfcc; }
.tabs { display: flex; gap: 2px; flex: 1; width: 0; overflow: hidden; margin-left: 17px; }
.tab { display: flex; align-items: center; flex: none; height: 34px; padding: 0 20px 0 22px; border: 1px solid transparent; color: #475569; }
.tab-name { gap: 7px; margin-right: 23px; }
.tab-x { margin-right: 24px; }
.tab-x:last-child { margin-right: 0; }
.tab.on { border: 1px solid #7ea2f2; border-bottom: 2px solid #2563eb; border-radius: 8px; background: #fff; color: #2563eb; }
.tab.on span { font-family: "Open Sans", sans-serif; font-weight: 600; color: #0f172a; }
.rule { width: 1px; height: 34px; margin: 0 10px 0 6px; background: #d3dce9; }
.tools { display: flex; align-items: center; gap: 4px; height: 34px; margin-right: 18px; padding-left: 6px; border-left: 1px solid #d3dce9; }
.tool.wide { margin-left: 2px; }
.tool.add { background: #d3dff8; border-color: #a4bdf3; }
.count { width: 24px; height: 24px; margin: 0 0 0 8px; border-radius: 50%; background: #fff; text-align: center; line-height: 24px; font-size: 11px; font-weight: 600; }

.body { display: flex; flex: 1; min-height: 0; }
.side { position: relative; display: flex; flex-direction: column; width: 280px; flex: none; border-right: 1px solid #c5d1e4; background: #edf2f7; box-shadow: 4px 0 16px rgba(100, 116, 160, .07); }
.side-brand { display: flex; align-items: flex-start; gap: 11px; height: 72px; flex: none; padding: 14px 0 0 13px; background: #e8ecf5; border-bottom: 1px solid #c5d1e4; }
.side-brand .brand span { font-size: 14px; line-height: 24px; gap: 5px; }
.side-brand .es { font-size: 13px; }
.msearch { display: flex; align-items: center; gap: 9px; height: 40px; flex: none; margin: 4px 12px 10px; padding: 0 14px; border: 1px solid #cbd6e6; border-radius: 10px; background: #fcfdff; color: #64748b; }
.msearch input { flex: 1; font-size: 12px; }
.stats { display: grid; grid-template-columns: 1fr 1fr; gap: 6px; margin: 0 12px; }
.stat { display: flex; flex-direction: column; justify-content: center; height: 49px; padding: 0 9px; border: 1px solid #dbe3f0; border-radius: 8px; background: #fff; }
.stat b { color: #0f172a; font: 700 11px/16px "DejaVu Sans Mono", monospace; }
.stat span { font-size: 9px; line-height: 16px; color: #475569; }
.places { display: flex; gap: 4px; height: 44px; flex: none; margin-top: 9px; padding: 5px 6px; border: 1px solid #dbe3f0; border-radius: 10px; }
.places button { flex: 1; width: 0; gap: 3px; border: 1px solid #dbe3f0; border-radius: 8px; background: #e8ecf5; font-size: 11px; }
.menu { flex: 1; min-height: 0; overflow: hidden; padding: 0 10px; }
.menu h2 { margin: 17px 0 5px 10px; font-size: 13px; line-height: 20px; font-weight: 600; color: #475569; }
.menu h2.second { margin: 28px 0 5px 10px; }
.item { display: flex; align-items: center; gap: 10px; min-height: 40px; padding: 0 12px; font-size: 13px; line-height: 18px; }
.item:last-of-type { min-height: 54px; margin-bottom: 2px; }
.chip { display: flex; align-items: center; justify-content: center; width: 22px; height: 22px; flex: none; border-radius: 7px; background: #d6eaf6; }
.chip.flat { height: 16px; border-radius: 8px; }
.chip.blue { background: #c8e6fa; color: #2563eb; }
.group { width: 100%; height: 36px; justify-content: flex-start; gap: 8px; padding: 0 10px; border-radius: 8px; color: #0f172a; font-size: 13px; }
.group .chip { color: #334155; }
.group .chip.blue { color: #2563eb; }
.group.open { background: #f8fafc; margin-top: 2px; }
.chev { margin-left: auto; color: #94a3b8; }
.tree { height: 40px; margin-left: 26px; padding: 17px 0 0 19px; border-left: 2px solid #bae0f4; }
.foot { height: 171px; flex: none; padding: 12px 12px 0; border-top: 1px solid #c5d1e4; background: #e8ecf5; }
.me { display: flex; align-items: center; gap: 8px; height: 54px; padding: 0 10px; border: 1px solid #dbe3f0; border-radius: 10px; background: #fff; }
.me div { display: flex; flex-direction: column; }
.me strong { color: #0f172a; font-size: 12px; line-height: 15px; }
.me small { font-size: 10px; line-height: 14px; color: #475569; }
.me-a { width: 28px; height: 28px; border: 1px solid #b4e2f5; border-radius: 7px; background: #e0f4fd; color: #2563eb; text-align: center; line-height: 26px; font-weight: 700; }
.foot-btns { display: grid; grid-template-columns: 66px 66px 1fr 1fr; gap: 5px; margin-top: 20px; }
.foot-btns button { height: 36px; border: 1px solid #dbe3f0; border-radius: 8px; background: #fff; font-weight: 600; }
.foot-btns .on { background: #2563eb; border-color: #2563eb; color: #fff; }
.copy { display: flex; align-items: center; gap: 8px; margin-top: 20px; font-size: 10px; line-height: 16px; color: #475569; }
.copy .es { color: #0f172a; font-weight: 700; font-size: 10px; }
.collapse { position: absolute; right: -9px; top: 470px; width: 18px; height: 36px; border: 1px solid #c5d1e4; border-radius: 5px; background: #fff; color: #64748b; }

.main { flex: 1; min-width: 0; padding: 10px 12px 0 28px; }
.sheet { padding: 14px 18px 23px; background: #fff; }
.card { border: 1px solid #c5d1e4; border-bottom-color: #dbe3f0; border-radius: 16px; background: #fff; box-shadow: 0 4px 16px rgba(15, 23, 42, .05); }
.head { display: flex; align-items: center; gap: 8px; height: 100px; padding: 0 20px; }
.head-text { flex: 1; display: flex; flex-direction: column; align-items: flex-start; }
.crumbs, .vendor { display: flex; font-size: 12px; line-height: 18px; color: #2563eb; }
.crumbs i { margin-left: 6px; color: #94a3b8; font-style: normal; }
h1 { margin: 9px 0 7px; font-size: 17px; line-height: 24px; font-weight: 700; color: #0f172a; }
.vendor { align-items: center; gap: 5px; }
.btn { height: 36px; gap: 6px; padding: 0 13px; border: 1px solid #c5d1e4; border-radius: 8px; background: #fff; font-size: 15px; font-weight: 600; margin-top: -2px; }
.btn.primary { padding: 0 15px; background: #2563eb; border-color: #2563eb; color: #fff; box-shadow: 0 1px 3px rgba(37, 99, 235, .4); }
.list { margin-top: 14px; border: 1px solid #d8e0ec; border-bottom-width: 2px; border-radius: 12px 12px 8px 8px; background: #fff; box-shadow: 0 8px 20px rgba(15, 23, 42, .07); }
.filter { height: 115px; padding: 12px 28px 0 16px; border: 1px solid #d8e0ec; border-bottom-width: 2px; border-radius: 12px; background: #fff; box-shadow: 0 8px 20px rgba(15, 23, 42, .07); }
.frow { display: flex; align-items: center; gap: 10px; }
.fsearch { display: flex; align-items: center; gap: 19px; flex: 1; height: 42px; padding: 0 10px; border: 1px solid #c5d1e4; border-radius: 10px; color: #0f172a; }
.fsearch input { flex: 1; font-size: 14px; }
.adv { height: 34px; gap: 6px; padding: 0 10px; border: 1px solid #dbe3f0; border-radius: 8px; font-size: 14px; }
.srow { display: flex; align-items: center; margin-top: 12px; }
.srow b { margin: 0 8px 0 5px; font-size: 11px; font-weight: 600; }
.all { width: 35px; height: 30px; border: 1px dashed #cfdaeb; border-radius: 8px; color: #475569; }
.colbar { display: flex; justify-content: flex-end; padding: 4px 7px 8px; }
.cols { height: 36px; gap: 4px; padding: 0 9px; border: 1px solid #c5d1e4; border-radius: 8px; background: #fff; color: #0f172a; font-weight: 600; }
table { width: 100%; border-collapse: collapse; table-layout: fixed; }
th { height: 26px; padding: 0 8px; background: #e8eef6; border-bottom: 1px solid #c5d1e4; border-left: 1px solid #dfe7f1; text-align: left; font-size: 11px; line-height: 16px; font-weight: 600; color: #0f172a; white-space: nowrap; }
th:first-child { border-left: 0; }
.c-name { width: 102px; }
.c-disc { width: 128px; border-left-color: #d0d9e6; }
.c-count { width: 110px; }
.c-status { width: 79px; }
.c-act { width: 97px; text-align: right; }
td { padding: 0; }
.empty { display: flex; flex-direction: column; align-items: center; height: 177px; padding-top: 32px; color: #64748b; }
.empty-ic { display: flex; align-items: center; justify-content: center; width: 54px; height: 54px; border-radius: 14px; background: #d6e0f5; color: #2563eb; }
.empty strong { margin: 14px 0 7px; color: #0f172a; font-size: 14px; line-height: 20px; }
</style>
